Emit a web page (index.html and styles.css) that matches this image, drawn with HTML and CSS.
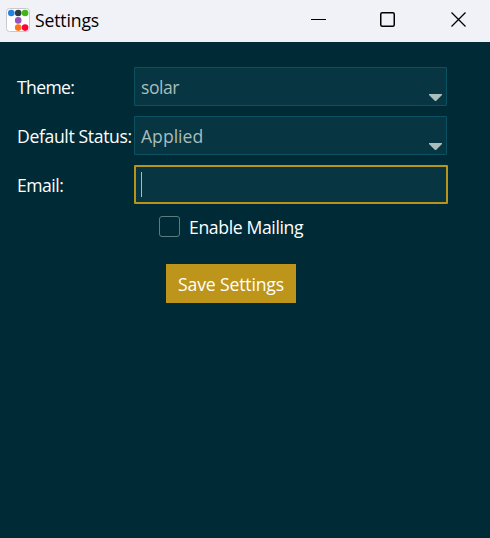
FILE: index.html
```html
<!DOCTYPE html>
<html lang="en">
<head>
<meta charset="utf-8">
<title>Settings</title>
<link rel="stylesheet" href="styles.css">
</head>
<body>
<header class="titlebar">
  <svg class="logo" width="24" height="24" viewBox="0 0 24 24">
    <rect x=".5" y=".5" width="23" height="23" rx="3" fill="#fff" stroke="#c9c9cc"/>
    <circle cx="5.3" cy="5" r="3.3" fill="#2383e2"/>
    <circle cx="12.2" cy="5" r="3.3" fill="#303c43"/>
    <circle cx="19.1" cy="5" r="3.3" fill="#3fb618"/>
    <circle cx="12.2" cy="12.4" r="3.3" fill="#9954bb"/>
    <circle cx="12.2" cy="19.6" r="3.3" fill="#ff7518"/>
    <circle cx="19.1" cy="19.6" r="3.3" fill="#ff0039"/>
  </svg>
  <h1 class="title">Settings</h1>
  <div class="controls">
    <svg width="16" height="16" viewBox="0 0 16 16"><path d="M0 7.5h15"/></svg>
    <svg width="16" height="16" viewBox="0 0 16 16"><rect class="maximize" x=".75" y=".75" width="13.5" height="13.5" rx="1.5"/></svg>
    <svg width="16" height="16" viewBox="0 0 16 16"><path class="close" d="M.5.5l14 14M14.5.5l-14 14"/></svg>
  </div>
</header>
<main class="form">
  <div class="row">
    <span class="label theme">Theme:</span>
    <div class="field"><span class="value solar">solar</span><svg class="arrow" width="13" height="7" viewBox="0 0 13 7"><path d="M0 0h13v1L7 7H6L0 1z"/></svg></div>
  </div>
  <div class="row">
    <span class="label status">Default Status:</span>
    <div class="field"><span class="value applied">Applied</span><svg class="arrow" width="13" height="7" viewBox="0 0 13 7"><path d="M0 0h13v1L7 7H6L0 1z"/></svg></div>
  </div>
  <div class="row">
    <span class="label email">Email:</span>
    <div class="field focused"><span class="caret"></span></div>
  </div>
  <div class="check"><span class="box"></span><span class="mailing">Enable Mailing</span></div>
  <button class="save">Save Settings</button>
</main>
</body>
</html>
```

FILE: styles.css
```css
* { box-sizing: border-box; }
body {
  margin: 0;
  height: 538px;
  overflow: hidden;
  background: #002b36;
  color: #fff;
  font: 17.6px/24px "Open Sans", "Noto Sans", sans-serif;
  letter-spacing: -0.36px;
  white-space: nowrap;
}
.titlebar {
  display: flex;
  align-items: center;
  height: 42px;
  padding: 0 23px 3px 6px;
  background: #f1f2f8;
  color: #000;
}
.logo { margin-right: 5px; }
.title { margin: 1px 0 0; font-size: 17.6px; font-weight: 400; letter-spacing: -0.15px; }
.controls { display: flex; margin-left: auto; }
.controls svg { display: block; margin-left: 55px; fill: none; stroke: #000; }
.controls svg:nth-child(2) { margin-left: 53px; }
.controls .maximize { stroke-width: 1.5; }
.controls .close { stroke-width: 1.3; }
.form { display: flex; flex-direction: column; padding: 25px 42px 0 17px; }
.row { display: flex; align-items: center; height: 39px; margin-bottom: 10px; }
.label { flex: 0 0 117px; }
.theme { letter-spacing: -0.65px; }
.email { letter-spacing: -0.5px; }
.field {
  display: flex;
  align-items: center;
  justify-content: space-between;
  width: 313px;
  height: 39px;
  padding: 0 4px 0 6px;
  border: 1px solid #0b5162;
  border-radius: 1px;
  background: #073642;
  color: #a9bdbd;
}
.solar { letter-spacing: -0.5px; }
.applied { letter-spacing: 0; }
.arrow { margin-top: 21px; fill: #a9bdbd; }
.focused { flex: none; width: 314px; padding: 0 5px; border: 2px solid #b8941b; }
.caret { width: 1px; height: 25px; background: #a9bdbd; }
.check { display: flex; align-items: center; gap: 9px; height: 21px; margin: 2px 0 27px 142px; }
.box { width: 21px; height: 21px; border: 1px solid #5c7b82; border-radius: 3px; }
.save {
  width: 130px;
  height: 39px;
  margin-left: 149px;
  padding: 0;
  border: 0;
  background: #bc951a;
  color: #fff;
  font: inherit;
  letter-spacing: -0.15px;
}
```
